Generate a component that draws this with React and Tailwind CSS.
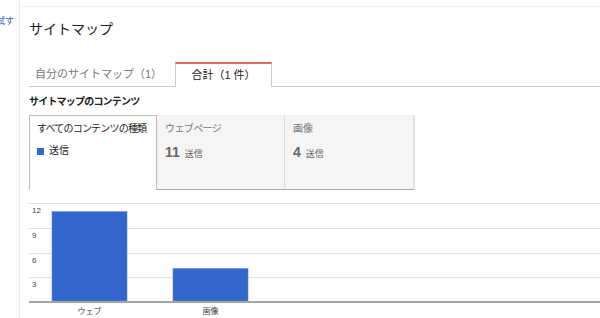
import React from 'react';

const bars = [
	{ label: 'ウェブ', value: 11 },
	{ label: '画像', value: 4 },
];

function ContentChart() {
	// 0..12 spans baseline (105) to top gridline (7.5)
	const unit = (105 - 7.5) / 12;
	const ticks = [
		{ v: 12, y: 7.5 },
		{ v: 9, y: 32.5 },
		{ v: 6, y: 57.5 },
		{ v: 3, y: 81.5 },
	];
	return (
		<svg width="571" height="122" className="block mt-[6px]">
			{ticks.map((t) => (
				<g key={t.v}>
					<line x1="0" x2="571" y1={t.y} y2={t.y} stroke="#e3e3e3" strokeWidth="1" />
					<text x="3" y={t.y + 9} fontSize="8" fill="#444" fontFamily="Liberation Sans, sans-serif">
						{t.v}
					</text>
				</g>
			))}
			{bars.map((b, i) => {
				const h = b.value * unit;
				const x = 23 + i * 121;
				return (
					<g key={b.label}>
						<rect x={x} y={105 - h} width="75" height={h} fill="#3366cc" stroke="#5f88db" strokeWidth="0.6" />
						<text
							x={x + 37.5}
							y="118"
							fontSize="8"
							fill="#444"
							textAnchor="middle"
							fontFamily="Liberation Sans, Noto Sans CJK JP, sans-serif"
						>
							{b.label}
						</text>
					</g>
				);
			})}
			<rect x="0" y="105" width="571" height="2" fill="#a6a6a6" />
		</svg>
	);
}

export default function App() {
	return (
		<div className="flex w-[600px] h-[318px] overflow-hidden bg-white font-['Liberation_Sans','Noto_Sans_CJK_JP',sans-serif]">
			<div className="w-[19px] shrink-0 overflow-hidden flex justify-end pt-[15px] pr-[5px]">
				<span className="text-[9px] leading-[12px] text-[#3366cc] whitespace-nowrap">試す</span>
			</div>
			<div className="flex-1 border-l border-[#ebebeb] pt-[6px]">
				<div className="border-t border-[#eeeeee] pl-[9px]">
					<h1 className="mt-[10px] h-[24px] leading-[24px] text-[14px] text-[#222]">サイトマップ</h1>

					<div className="mt-[21px] flex h-[25px] border-b border-[#cccccc]">
						<div className="w-[146px] pl-[6px] flex items-center text-[11px] text-[#777]">
							自分のサイトマップ（1）
						</div>
						<div className="w-[97px] h-[25px] -mb-px border-t-2 border-x border-[#cccccc] border-t-[#e06a5a] bg-white flex items-center justify-center text-[11px] text-[#222]">
							合計（1 件）
						</div>
					</div>

					<h2 className="mt-[8px] leading-[14px] text-[10px] tracking-[-0.8px] font-bold text-[#222]">
						サイトマップのコンテンツ
					</h2>

					<div className="mt-[6px] flex h-[75px]">
						<div className="w-[128px] border-l border-t border-r border-[#bbbbbb] bg-white pl-[7px] pt-[6px]">
							<div className="leading-[14px] text-[10px] tracking-[-0.8px] text-[#222] whitespace-nowrap">
								すべてのコンテンツの種類
							</div>
							<div className="mt-[8px] flex items-center gap-[5px] leading-[14px] text-[10px] text-[#222]">
								<span className="w-[7px] h-[7px] bg-[#3366cc]" />
								送信
							</div>
						</div>
						<div className="w-[128px] bg-[#f5f5f5] border-b border-[#aaaaaa] border-r border-r-[#dddddd] pl-[8px] pt-[7px]">
							<div className="leading-[14px] text-[10px] tracking-[-0.6px] text-[#777]">ウェブページ</div>
							<div className="mt-[8px] flex items-baseline gap-[5px] leading-[16px] text-[#666]">
								<span className="text-[14px] font-bold">11</span>
								<span className="text-[9px]">送信</span>
							</div>
						</div>
						<div className="w-[130px] bg-[#f5f5f5] border-b border-[#aaaaaa] border-r-2 border-r-[#e4e4e4] pl-[8px] pt-[7px]">
							<div className="leading-[14px] text-[10px] text-[#777]">画像</div>
							<div className="mt-[8px] flex items-baseline gap-[5px] leading-[16px] text-[#666]">
								<span className="text-[14px] font-bold">4</span>
								<span className="text-[9px]">送信</span>
							</div>
						</div>
					</div>

					<ContentChart />
				</div>
			</div>
		</div>
	);
}
